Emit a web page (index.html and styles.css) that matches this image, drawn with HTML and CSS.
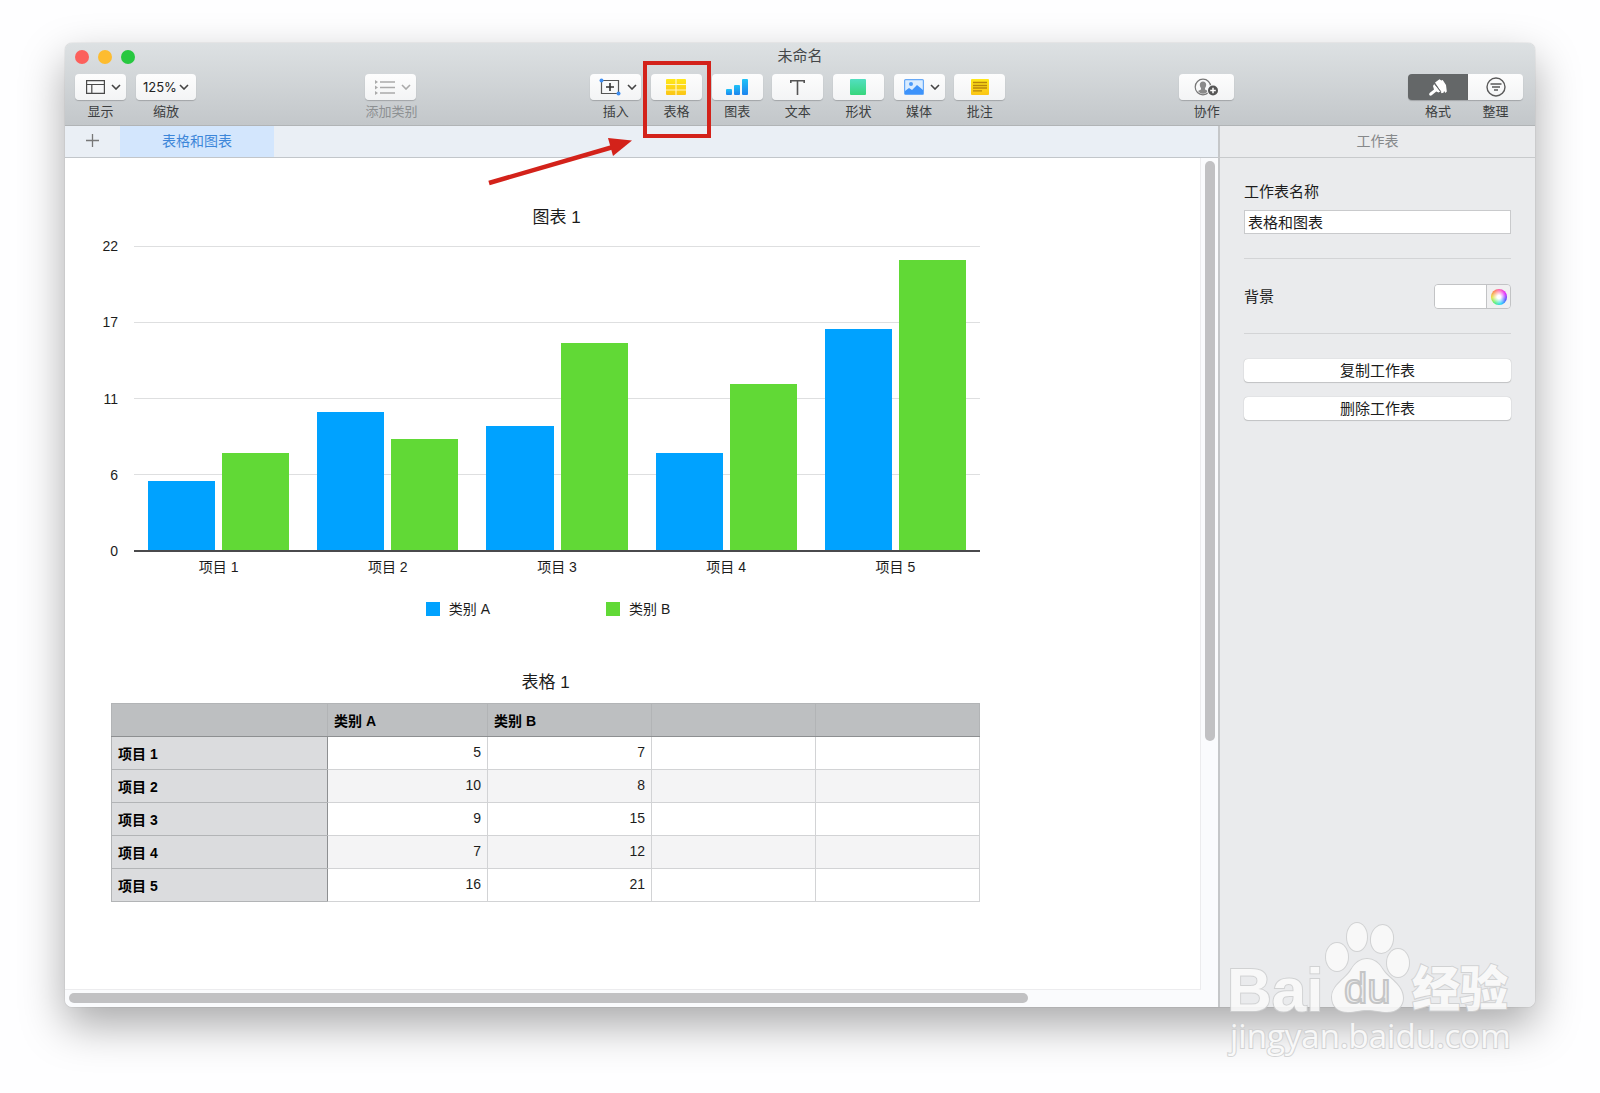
FILE: index.html
```html
<!DOCTYPE html>
<html lang="zh-CN">

<head>
    <meta charset="UTF-8">
    <meta name="viewport" content="width=device-width, initial-scale=1.0">
    <title>未命名</title>
    <link rel="stylesheet" href="styles.css">
</head>

<body>
    <div class="window">
        <header class="header">
            <div class="titlebar">
                <div class="lights">
                    <button type="button" class="light red" aria-label="关闭"></button>
                    <button type="button" class="light yellow" aria-label="最小化"></button>
                    <button type="button" class="light green" aria-label="全屏"></button>
                </div>
                <h1 class="title">未命名</h1>
            </div>
            <div class="toolbar">
                <div class="group">
                    <button type="button" class="tool">
                        <span class="pill menu">
                            <svg width="19" height="14" viewBox="0 0 19 14" fill="none" stroke="#4a4a4a" stroke-width="1.2"><path d="M.6.6h17.8v12.8H.6zM.6 4.5h17.8M5.8 4.5v9"/></svg>
                            <svg class="chevron" viewBox="0 0 10 6"><path d="M1 1l4 4 4-4"/></svg>
                        </span>
                        <span class="label">显示</span>
                    </button>
                    <div class="tool zoom">
                        <span class="pill">
                            <select id="zoom">
                                <option>125%</option>
                                <option>100%</option>
                                <option>75%</option>
                            </select>
                            <svg class="chevron" viewBox="0 0 10 6"><path d="M1 1l4 4 4-4"/></svg>
                        </span>
                        <label class="label" for="zoom">缩放</label>
                    </div>
                </div>
                <div class="spacer narrow"></div>
                <button type="button" class="tool" disabled>
                    <span class="pill menu">
                        <svg width="20" height="15" viewBox="0 0 20 15" fill="#aaa"><path d="M0 0l3 2-3 2zM0 5.500l3 2-3 2zM0 11l3 2-3 2zM5 1.300h15v1.400H5zM5 6.800h15v1.400H5zM5 12.300h15v1.400H5z"/></svg>
                        <svg class="chevron" viewBox="0 0 10 6"><path d="M1 1l4 4 4-4"/></svg>
                    </span>
                    <span class="label">添加类别</span>
                </button>
                <div class="spacer"></div>
                <div class="group inserts">
                    <button type="button" class="tool">
                        <span class="pill menu">
                            <svg width="22" height="18" viewBox="0 0 22 18" fill="none"><path d="M2.500 2.500h17v13h-17z" stroke="#555" stroke-width="1.200"/><path d="M11 5v8M7 9h8" stroke="#333" stroke-width="1.600"/><circle cx="2.500" cy="2.500" r="2" fill="#3f8ef0"/><circle cx="19.500" cy="15.500" r="2" fill="#3f8ef0"/></svg>
                            <svg class="chevron" viewBox="0 0 10 6"><path d="M1 1l4 4 4-4"/></svg>
                        </span>
                        <span class="label">插入</span>
                    </button>
                    <button type="button" class="tool marked">
                        <span class="pill">
                            <svg width="20" height="16" viewBox="0 0 20 16">
                                <linearGradient id="gold" x2="0" y2="1"><stop stop-color="#ffe81a"/><stop offset="1" stop-color="#fbc516"/></linearGradient>
                                <rect width="20" height="16" rx="1" fill="url(#gold)"/>
                                <path d="M10 0v16M0 5.500h20M0 11h20" stroke="#fff6c0" stroke-width="1.200"/>
                            </svg>
                        </span>
                        <span class="label">表格</span>
                        <span class="frame"></span>
                        <svg class="arrow" width="146" height="52" viewBox="0 0 146 52">
                            <path d="M2 47L126 11" stroke="#d3221a" stroke-width="4.500"/>
                            <path d="M121 2l24 2.500L126 20z" fill="#d3221a"/>
                        </svg>
                    </button>
                    <button type="button" class="tool">
                        <span class="pill">
                            <svg width="22" height="16" viewBox="0 0 22 16">
                                <linearGradient id="azure" x2="0" y2="1"><stop stop-color="#1fc3f7"/><stop offset="1" stop-color="#1d84ee"/></linearGradient>
                                <g fill="url(#azure)"><rect y="10" width="6" height="6" rx="1"/><rect x="8" y="6" width="6" height="10" rx="1"/><rect x="16" width="6" height="16" rx="1"/></g>
                            </svg>
                        </span>
                        <span class="label">图表</span>
                    </button>
                    <button type="button" class="tool">
                        <span class="pill">
                            <svg width="15" height="15" viewBox="0 0 15 15" fill="none" stroke="#555" stroke-width="1.600"><path d="M.8 3V.8h13.400V3M7.500 1v14"/></svg>
                        </span>
                        <span class="label">文本</span>
                    </button>
                    <button type="button" class="tool">
                        <span class="pill">
                            <svg width="16" height="16" viewBox="0 0 16 16">
                                <linearGradient id="mint" x2="0" y2="1"><stop stop-color="#52dfc0"/><stop offset="1" stop-color="#37d67c"/></linearGradient>
                                <rect width="16" height="16" rx="1" fill="url(#mint)"/>
                            </svg>
                        </span>
                        <span class="label">形状</span>
                    </button>
                    <button type="button" class="tool">
                        <span class="pill menu">
                            <svg width="20" height="16" viewBox="0 0 20 16"><rect x=".6" y=".6" width="18.800" height="14.800" rx="1" fill="#d9ecff" stroke="#67a9f7" stroke-width="1.200"/><circle cx="7" cy="5" r="2" fill="#4b9bfa"/><path d="M1 12l4-3 3 2 5-5 6 5v4H1z" fill="#3d93fb"/></svg>
                            <svg class="chevron" viewBox="0 0 10 6"><path d="M1 1l4 4 4-4"/></svg>
                        </span>
                        <span class="label">媒体</span>
                    </button>
                    <button type="button" class="tool">
                        <span class="pill">
                            <svg width="18" height="16" viewBox="0 0 18 16"><rect width="18" height="16" rx="1" fill="url(#gold)"/><path d="M2 3.500h14M2 6.500h14M2 9h14M2 11.800h9" stroke="#b8860b" stroke-width="1.300"/></svg>
                        </span>
                        <span class="label">批注</span>
                    </button>
                </div>
                <div class="spacer"></div>
                <button type="button" class="tool share">
                    <span class="pill">
                        <svg width="25" height="19" viewBox="0 0 25 19"><circle cx="9" cy="9" r="7.800" fill="none" stroke="#777" stroke-width="1.200"/><path d="M9 3.500c2 0 3.200 1.400 3.200 3.300 0 1.500-.7 2.600-1.200 3.300v1.400l3 1.600c-1.200 1.600-3 2.600-5 2.600s-3.800-1-5-2.600l3-1.600v-1.400c-.5-.7-1.200-1.800-1.200-3.300C5.800 4.900 7 3.500 9 3.500z" fill="#8a8a8a"/><circle cx="19" cy="12.500" r="6" fill="#f7f8f9"/><circle cx="19" cy="12.500" r="5" fill="#555"/><path d="M19 9.700v5.600M16.200 12.500h5.600" stroke="#fff" stroke-width="1.500"/></svg>
                    </span>
                    <span class="label">协作</span>
                </button>
                <div class="spacer"></div>
                <div class="segments">
                    <button type="button" class="tool active">
                        <span class="pill">
                            <svg width="18" height="17" viewBox="0 0 18 17" fill="#fff"><path d="M6 3.500L10.500.3l1.800 1.200 1.400-.4 3.300 5 .8 6.400-1.400 1.500-1.300-2-.6 1.800-2 .4-1-2.200z"/><path d="M5.200 5l6 7.600-1.700.9-2.200-1L3 16c-.8.9-1.900.9-2.500.2S.1 14.500.9 13.800L5 10.400 4 7z"/><path d="M5.600 4.600l6.200 8" stroke="#646768" stroke-width=".9"/></svg>
                        </span>
                        <span class="label">格式</span>
                    </button>
                    <button type="button" class="tool">
                        <span class="pill">
                            <svg width="20" height="20" viewBox="0 0 20 20" fill="none" stroke="#5a5a5a" stroke-width="1.400"><circle cx="10" cy="10" r="9"/><path d="M4.500 7h11M6 10h8M8 13h4"/></svg>
                        </span>
                        <span class="label">整理</span>
                    </button>
                </div>
            </div>
        </header>

        <div class="content">
            <main class="main">
                <nav class="tabs">
                    <button type="button" class="add" aria-label="添加工作表">
                        <svg width="13" height="13" viewBox="0 0 13 13" stroke="#777" stroke-width="1.300"><path d="M6.500 0v13M0 6.500h13"/></svg>
                    </button>
                    <button type="button" class="tab">表格和图表</button>
                </nav>
                <div class="canvas">
                    <div class="sheet">
                        <section class="chart">
                            <h2 class="chart-title">图表 1</h2>
                            <div class="plot">
                                <div class="axis-y">
                                    <span>22</span>
                                    <span>17</span>
                                    <span>11</span>
                                    <span>6</span>
                                    <span>0</span>
                                </div>
                                <div class="bars">
                                    <div class="pair">
                                        <div class="bar a" style="--value: 5"></div>
                                        <div class="bar b" style="--value: 7"></div>
                                    </div>
                                    <div class="pair">
                                        <div class="bar a" style="--value: 10"></div>
                                        <div class="bar b" style="--value: 8"></div>
                                    </div>
                                    <div class="pair">
                                        <div class="bar a" style="--value: 9"></div>
                                        <div class="bar b" style="--value: 15"></div>
                                    </div>
                                    <div class="pair">
                                        <div class="bar a" style="--value: 7"></div>
                                        <div class="bar b" style="--value: 12"></div>
                                    </div>
                                    <div class="pair">
                                        <div class="bar a" style="--value: 16"></div>
                                        <div class="bar b" style="--value: 21"></div>
                                    </div>
                                </div>
                            </div>
                            <div class="axis-x">
                                <span>项目 1</span>
                                <span>项目 2</span>
                                <span>项目 3</span>
                                <span>项目 4</span>
                                <span>项目 5</span>
                            </div>
                            <div class="legend">
                                <span class="key"><i class="swatch a"></i>类别 A</span>
                                <span class="key"><i class="swatch b"></i>类别 B</span>
                            </div>
                        </section>

                        <table class="table">
                            <caption>表格 1</caption>
                            <colgroup>
                                <col class="col-name">
                                <col class="col-first">
                                <col>
                                <col>
                                <col>
                            </colgroup>
                            <thead>
                                <tr><th></th><th>类别 A</th><th>类别 B</th><th></th><th></th></tr>
                            </thead>
                            <tbody>
                                <tr><th>项目 1</th><td>5</td><td>7</td><td></td><td></td></tr>
                                <tr><th>项目 2</th><td>10</td><td>8</td><td></td><td></td></tr>
                                <tr><th>项目 3</th><td>9</td><td>15</td><td></td><td></td></tr>
                                <tr><th>项目 4</th><td>7</td><td>12</td><td></td><td></td></tr>
                                <tr><th>项目 5</th><td>16</td><td>21</td><td></td><td></td></tr>
                            </tbody>
                        </table>
                    </div>
                    <div class="track-y"><div class="thumb"></div></div>
                    <div class="track-x"><div class="thumb"></div></div>
                </div>
            </main>

            <aside class="sidebar">
                <h2 class="sidebar-title">工作表</h2>
                <form class="panel">
                    <label for="sheet-name">工作表名称</label>
                    <input type="text" id="sheet-name" class="name" value="表格和图表">
                    <hr>
                    <div class="row">
                        <label for="background">背景</label>
                        <div class="well">
                            <input type="color" id="background" value="#ffffff">
                            <button type="button" class="wheel" aria-label="颜色"><span></span></button>
                        </div>
                    </div>
                    <hr>
                    <button type="button" class="btn">复制工作表</button>
                    <button type="button" class="btn">删除工作表</button>
                </form>
            </aside>
        </div>
    </div>

    <svg class="watermark" width="300" height="150" viewBox="0 0 300 150">
        <g class="ink">
            <text class="brand" x="7" y="96">Bai</text>
            <ellipse cx="117" cy="42" rx="11" ry="14"/>
            <ellipse cx="137" cy="22" rx="10" ry="14"/>
            <ellipse cx="162" cy="24" rx="11" ry="14" transform="rotate(8 162 24)"/>
            <ellipse cx="178" cy="48" rx="11" ry="14"/>
            <path d="M147 44c7 0 12 4 16 11 5 8 20 15 20 28 0 8-6 14-16 14-7 0-12-2-20-2s-11 2-19 2c-10 0-16-6-16-15 0-12 14-18 19-27 4-7 9-11 16-11z"/>
            <text class="brand-cn" x="192" y="91">经验</text>
            <text class="site" x="10" y="133">jingyan.baidu.com</text>
        </g>
        <text class="du" x="124" y="88">du</text>
    </svg>
</body>

</html>
```
FILE: styles.css
```css
* {
    box-sizing: border-box;
}

body {
    margin: 0;
    min-height: 100vh;
    padding: 43px 65px 86px;
    display: flex;
    position: relative;
    overflow-x: hidden;
    background: #fefeff;
    color: #1c1c1c;
    font-family: "Liberation Sans", "Noto Sans CJK SC", sans-serif;
    font-size: 14px;
}

button,
input,
select {
    font: inherit;
    color: inherit;
}

button {
    padding: 0;
    border: 0;
    background: none;
}

h1,
h2 {
    margin: 0;
    font-weight: 400;
}

.window {
    flex: 1;
    display: flex;
    flex-direction: column;
    border-radius: 7px;
    box-shadow: 0 0 1px rgba(0, 0, 0, .4), 0 18px 44px rgba(0, 0, 0, .34);
}

/* title bar and toolbar */

.header {
    border-bottom: 1px solid #b1b4b6;
    border-radius: 7px 7px 0 0;
    background: linear-gradient(#dde1e3, #c3c7ca);
}

.titlebar {
    display: grid;
    grid-template-columns: 1fr auto 1fr;
    align-items: center;
    height: 28px;
    padding: 0 10px;
    margin-bottom: 3px;
}

.lights {
    display: flex;
    gap: 9px;
}

.light {
    width: 14px;
    height: 14px;
    border-radius: 50%;
}

.red {
    background: #fc605c;
}

.yellow {
    background: #fdbc2f;
}

.green {
    background: #27c840;
}

.title {
    font-size: 15px;
    line-height: 20px;
    padding-bottom: 2px;
    color: #444648;
}

.toolbar {
    display: flex;
    padding: 0 12px 4px 10px;
}

.group {
    display: flex;
    gap: 10px;
}

.inserts {
    width: 415px;
    gap: 0;
    justify-content: space-between;
}

.spacer {
    flex: 40;
}

.spacer.narrow {
    flex: 39;
}

.tool {
    position: relative;
    display: flex;
    flex-direction: column;
    gap: 3px;
    width: 51px;
}

.tool.zoom {
    width: 60px;
}

.tool.share {
    width: 55px;
}

.pill {
    display: flex;
    align-items: center;
    justify-content: center;
    gap: 6px;
    height: 26px;
    border-radius: 4px;
    background: linear-gradient(#fdfdfd, #f3f4f5);
    box-shadow: 0 1px 1px rgba(0, 0, 0, .2);
}

.menu {
    padding-left: 5px;
}

.label {
    font-size: 13px;
    line-height: 18px;
    text-align: center;
    white-space: nowrap;
    color: #3c3e40;
}

.chevron {
    width: 10px;
    height: 6px;
    fill: none;
    stroke: #444;
    stroke-width: 1.6;
}

.tool:disabled .label {
    color: #8d9092;
}

.tool:disabled .chevron {
    stroke: #aaa;
}

.zoom .pill {
    gap: 3px;
}

.zoom select {
    appearance: none;
    width: 33px;
    padding: 0;
    border: 0;
    background: none;
    color: #222;
    font-family: Inter, sans-serif;
    font-size: 13px;
}

.segments {
    display: flex;
}

.segments .tool {
    width: 55px;
}

.segments .tool .pill {
    border-radius: 0 4px 4px 0;
}

.segments .tool.active {
    width: 60px;
}

.segments .active .pill {
    border-radius: 4px 0 0 4px;
    background: #646768;
}

/* red callout around the table button */

.frame {
    position: absolute;
    top: -13px;
    left: -8px;
    right: -9px;
    height: 77px;
    border: 4px solid #d3221a;
    z-index: 2;
}

.arrow {
    position: absolute;
    top: 62px;
    right: 69px;
    z-index: 2;
}

/* sheet area */

.content {
    flex: 1;
    display: flex;
}

.main {
    flex: 1;
    display: flex;
    flex-direction: column;
    min-width: 0;
}

.tabs {
    display: flex;
    height: 32px;
    border-bottom: 1px solid #c2c6ca;
    background: #eaeff5;
}

.add {
    width: 55px;
}

.tab {
    width: 154px;
    padding-bottom: 3px;
    background: #d3e6fd;
    color: #3d86d9;
}

.canvas {
    flex: 1;
    display: grid;
    grid-template-columns: 1fr 17px;
    grid-template-rows: 1fr 17px;
    border-radius: 0 0 0 7px;
    background: #fafbfd;
}

.sheet {
    padding: 46px 220px 60px 34px;
    border-right: 1px solid #ececee;
    border-bottom: 1px solid #ececee;
    background: #fff;
}

.track-y {
    padding: 3px 3px 0 4px;
}

.track-y .thumb {
    width: 10px;
    height: 70%;
    border-radius: 5px;
    background: #c1c1c3;
}

.track-x {
    padding: 3px 4px;
}

.track-x .thumb {
    width: 85%;
    height: 10px;
    border-radius: 5px;
    background: #c1c1c3;
}

/* chart */

.chart-title {
    padding-left: 34px;
    font-size: 17px;
    line-height: 28px;
    text-align: center;
}

.plot {
    display: flex;
    gap: 16px;
    margin-top: 14px;
}

.axis-y {
    display: flex;
    flex-direction: column;
    justify-content: space-between;
    width: 19px;
    margin: -8px 0 -7px;
    line-height: 16px;
    text-align: right;
}

.bars {
    flex: 1;
    display: flex;
    height: 306px;
    border-bottom: 2px solid #4a4a4c;
    background: repeating-linear-gradient(#dedfe0 0 1px, transparent 1px 76px);
}

.pair {
    flex: 1;
    display: flex;
    align-items: flex-end;
    gap: 7px;
    padding: 0 14px;
}

.bar {
    flex: 1;
    height: calc(var(--value) / 22 * 100%);
}

.a {
    background: #00a2ff;
}

.b {
    background: #61d936;
}

.axis-x {
    display: flex;
    margin: 5px 0 0 35px;
    line-height: 20px;
}

.axis-x span {
    flex: 1;
    text-align: center;
}

.legend {
    display: flex;
    justify-content: center;
    gap: 116px;
    margin-top: 22px;
    padding-left: 17px;
    line-height: 20px;
}

.key {
    display: flex;
    align-items: center;
    gap: 9px;
}

.swatch {
    width: 14px;
    height: 14px;
}

/* table */

.table {
    width: calc(100% - 12px);
    margin: 50px 0 0 12px;
    border-collapse: collapse;
    table-layout: fixed;
}

.table caption {
    padding-bottom: 6px;
    font-size: 17px;
    line-height: 28px;
}

.col-name {
    width: 216px;
}

.col-first {
    width: 160px;
}

.table th,
.table td {
    height: 33px;
    padding: 0 6px;
    border: 1px solid #d2d3d5;
    text-align: right;
}

.table td {
    padding-bottom: 3px;
}

.table th {
    border-color: #b2b4b6;
    background: #dbdcde;
    font-weight: 700;
    color: #000;
    text-align: left;
}

.table thead th {
    background: #bdbfc1;
    border-bottom-color: #8d8f91;
}

.table tbody th {
    border-right-color: #8d8f91;
}

.table tbody tr:nth-child(even) td {
    background: #f4f4f5;
}

/* inspector */

.sidebar {
    width: 317px;
    border-left: 2px solid #c5c7c9;
    border-radius: 0 0 7px 0;
    background: #eaebed;
}

.sidebar-title {
    height: 32px;
    border-bottom: 1px solid #c8cacc;
    font-size: 14px;
    line-height: 30px;
    text-align: center;
    color: #86888a;
}

.panel {
    display: flex;
    flex-direction: column;
    padding: 23px 24px;
    font-size: 15px;
    line-height: 22px;
}

.name {
    height: 24px;
    margin-top: 7px;
    padding: 0 3px 2px;
    border: 1px solid #c9cacc;
    background: #fff;
}

.panel hr {
    width: 100%;
    margin: 24px 0 25px;
    border: 0;
    border-top: 1px solid #d3d4d6;
}

.row {
    display: flex;
    align-items: center;
    justify-content: space-between;
}

.well {
    display: flex;
    width: 77px;
    height: 25px;
    border: 1px solid #c2c3c5;
    border-radius: 4px;
    overflow: hidden;
}

.well input {
    flex: 1;
    min-width: 0;
    height: 100%;
    padding: 0;
    border: 0;
    background: #fff;
}

.well input::-webkit-color-swatch-wrapper {
    padding: 0;
}

.well input::-webkit-color-swatch {
    border: 0;
}

.wheel {
    display: flex;
    align-items: center;
    justify-content: center;
    width: 24px;
    border-left: 1px solid #c2c3c5;
    background: #f0f0f1;
}

.wheel span {
    width: 16px;
    height: 16px;
    border-radius: 50%;
    background: radial-gradient(#fff 15%, rgba(255, 255, 255, 0) 75%), conic-gradient(from 60deg, #d0f, #33f, #0cf, #3e6, #dd2, #f73, #f4a, #d0f);
}

.btn {
    height: 23px;
    margin-bottom: 15px;
    border-radius: 4px;
    background: #fff;
    box-shadow: 0 0 1px rgba(0, 0, 0, .3), 0 1px 1px rgba(0, 0, 0, .15);
}

/* watermark */

.watermark {
    position: absolute;
    right: 80px;
    bottom: 28px;
    z-index: 3;
    pointer-events: none;
}

.ink {
    fill: #fafafa;
    stroke: #cfd0d1;
    stroke-width: 2;
    paint-order: stroke;
    opacity: .9;
}

.brand {
    font: 700 62px "Liberation Sans", sans-serif;
}

.brand-cn {
    font: 900 48px "Noto Sans CJK SC", sans-serif;
}

.site {
    font: 400 33px "Open Sans", sans-serif;
}

.du {
    font: 400 42px "Liberation Sans", sans-serif;
    fill: #eeeeef;
    stroke: #c4c5c6;
    stroke-width: 2;
}
```
